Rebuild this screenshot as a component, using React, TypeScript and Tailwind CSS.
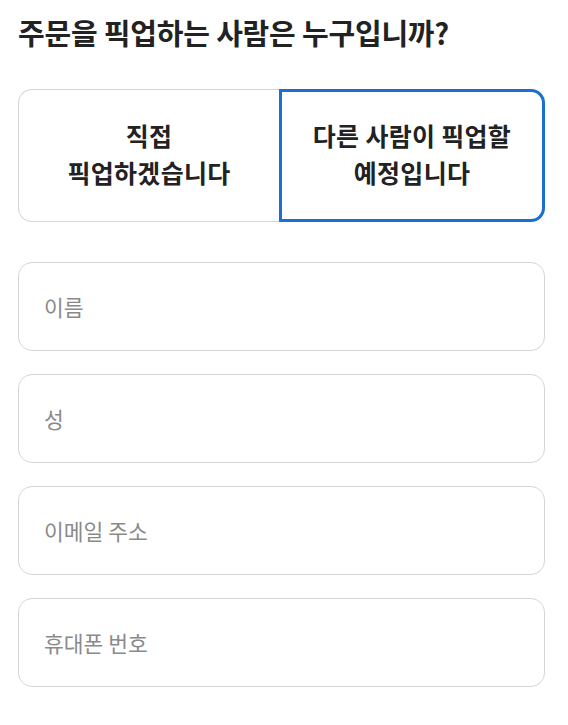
const fields = ["이름", "성", "이메일 주소", "휴대폰 번호"];

export default function App() {
    return (
        <div className="min-h-screen bg-white px-[18px] pt-[13px] text-[#222] font-['Noto_Sans_CJK_KR','Noto_Sans',sans-serif]">
            <h1 className="text-[29px] leading-[38px] font-bold tracking-[-0.2px] whitespace-nowrap">주문을 픽업하는 사람은 누구입니까?</h1>

            <div className="mt-[38px] flex h-[133px] w-[527px]">
                <button className="flex-1 rounded-l-[14px] border border-r-0 border-[#d6d6d6] pb-[3px] text-[25px] leading-[37px] font-bold tracking-[0.3px] text-[#222]">
                    직접<br />픽업하겠습니다
                </button>
                <button className="flex-1 rounded-r-[14px] border-[3px] border-[#1a6fd0] pb-[3px] text-[25px] leading-[37px] font-bold tracking-[0.3px] text-[#222]">
                    다른 사람이 픽업할<br />예정입니다
                </button>
            </div>

            <div className="mt-[40px] flex w-[527px] flex-col gap-[23px]">
                {fields.map((f) => (
                    <input
                        key={f}
                        placeholder={f}
                        className="h-[89px] rounded-[14px] border border-[#d6d6d6] px-[25px] text-[21.5px] outline-none placeholder:text-[#8a8a8a]"
                    />
                ))}
            </div>
        </div>
    );
}
